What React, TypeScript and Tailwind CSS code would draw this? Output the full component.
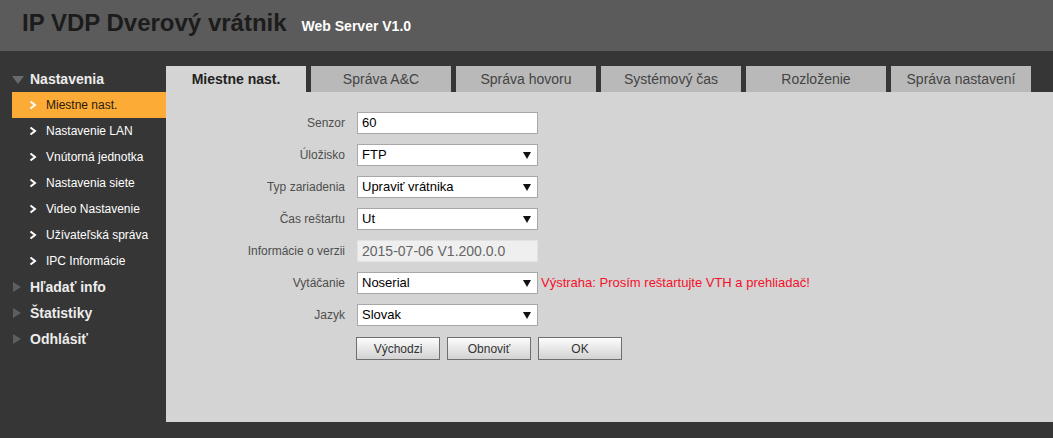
import React from 'react'

const subItems = [
  'Miestne nast.',
  'Nastavenie LAN',
  'Vnútorná jednotka',
  'Nastavenia siete',
  'Video Nastavenie',
  'Užívateľská správa',
  'IPC Informácie',
]

const tabs = ['Miestne nast.', 'Správa A&C', 'Správa hovoru', 'Systémový čas', 'Rozloženie', 'Správa nastavení']

function Chevron() {
  return (
    <svg width="8" height="10" viewBox="0 0 8 10" className="shrink-0">
      <polyline points="1.5,1.5 6,5 1.5,8.5" fill="none" stroke="#ffffff" strokeWidth="2" />
    </svg>
  )
}

function Caret() {
  return (
    <svg width="8" height="7" viewBox="0 0 8 7">
      <polygon points="0,0 8,0 4,7" fill="#111" />
    </svg>
  )
}

function Row({ label, children }: { label: string; children: React.ReactNode }) {
  return (
    <div className="flex items-center h-[22px]">
      <div className="w-[191px] pr-[12px] text-right text-[12px] text-[#4e4e4e]">{label}</div>
      {children}
    </div>
  )
}

function Select({ value }: { value: string }) {
  return (
    <div className="w-[181px] h-[22px] bg-white border border-[#a8a8a8] flex items-center justify-between pl-[4px] pr-[6px] text-[13px] text-black">
      <span>{value}</span>
      <Caret />
    </div>
  )
}

function Btn({ children }: { children: React.ReactNode }) {
  return (
    <button className="w-[84px] h-[23px] border border-[#6f6f6f] bg-gradient-to-b from-[#fdfdfd] to-[#d2d2d2] text-[12px] text-[#333]">
      {children}
    </button>
  )
}

export default function App() {
  return (
    <div className="w-[1053px] h-[438px] bg-[#363636] font-['Liberation_Sans',Arial,sans-serif] overflow-hidden">
      {/* Header */}
      <div className="h-[51px] bg-[#5b5b5b] flex items-baseline pl-[22px] pt-[11px]">
        <span className="text-[24px] font-bold text-[#1c1c1c] leading-none">IP VDP Dverový vrátnik</span>
        <span className="ml-[15px] text-[14px] font-bold text-white">Web Server V1.0</span>
      </div>

      <div className="flex">
        {/* Sidebar */}
        <div className="w-[166px] pt-[15px]">
          <div className="h-[26px] flex items-center pl-[12px] gap-[6px]">
            <svg width="12" height="9" viewBox="0 0 12 9">
              <polygon points="0,1 12,1 6,9" fill="#6a6a6a" />
            </svg>
            <span className="text-[14px] font-bold text-[#ececec]">Nastavenia</span>
          </div>
          {subItems.map((s, i) => (
            <div
              key={s}
              className={
                'h-[26px] ml-[12px] flex items-center pl-[17px] gap-[9px] text-[12px] ' +
                (i === 0 ? 'bg-[#fdab37] text-[#2a1a0a]' : 'text-white')
              }
            >
              <Chevron />
              <span>{s}</span>
            </div>
          ))}
          {['Hľadať info', 'Štatistiky', 'Odhlásiť'].map(s => (
            <div key={s} className="h-[26px] flex items-center pl-[13px] gap-[9px]">
              <svg width="8" height="10" viewBox="0 0 8 10">
                <polygon points="0,0 8,5 0,10" fill="#5e5e5e" />
              </svg>
              <span className="text-[14px] font-bold text-[#ececec]">{s}</span>
            </div>
          ))}
        </div>

        {/* Main */}
        <div className="flex-1 pt-[15px]">
          <div className="flex gap-[5px] h-[26px]">
            {tabs.map((t, i) => (
              <div
                key={t}
                className={
                  'w-[140px] flex items-center justify-center text-[14px] ' +
                  (i === 0 ? 'bg-[#d4d4d4] font-bold text-[#222]' : 'bg-[#b9b9b9] text-[#444]')
                }
              >
                {t}
              </div>
            ))}
          </div>
          <div className="h-[330px] bg-[#d4d4d4] pt-[20px] flex flex-col gap-[10px]">
            <Row label="Senzor">
              <div className="w-[181px] h-[22px] bg-white border border-[#a8a8a8] flex items-center pl-[4px] text-[13px] text-black">60</div>
            </Row>
            <Row label="Úložisko">
              <Select value="FTP" />
            </Row>
            <Row label="Typ zariadenia">
              <Select value="Upraviť vrátnika" />
            </Row>
            <Row label="Čas reštartu">
              <Select value="Ut" />
            </Row>
            <Row label="Informácie o verzii">
              <div className="w-[181px] h-[22px] bg-[#efefef] border border-[#e2e2e2] flex items-center pl-[4px] text-[14px] text-[#666]">
                2015-07-06 V1.200.0.0
              </div>
            </Row>
            <Row label="Vytáčanie">
              <Select value="Noserial" />
              <span className="ml-[3px] text-[13px] text-[#f5102a]">Výstraha: Prosím reštartujte VTH a prehliadač!</span>
            </Row>
            <Row label="Jazyk">
              <Select value="Slovak" />
            </Row>
            <div className="flex gap-[7px] pl-[190px] mt-[1px]">
              <Btn>Východzi</Btn>
              <Btn>Obnoviť</Btn>
              <Btn>OK</Btn>
            </div>
          </div>
        </div>
      </div>
    </div>
  )
}
